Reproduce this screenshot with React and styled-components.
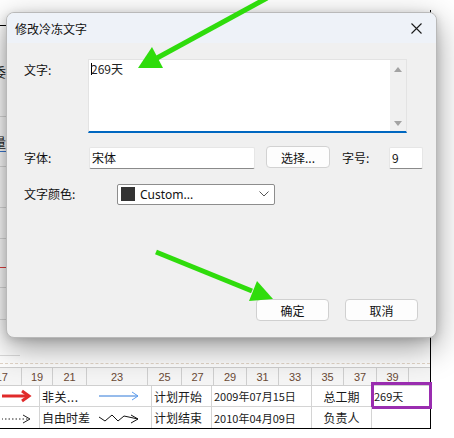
import React from "react";
import styled, { createGlobalStyle } from "styled-components";

const GlobalStyle = createGlobalStyle`
  html, body {
    margin: 0;
    padding: 0;
    background: #ffffff;
  }
  body {
    font-family: "Noto Sans CJK SC", "Noto Sans", sans-serif;
  }
`;

const CJK = `"Noto Sans CJK SC", "Noto Sans", sans-serif`;

const headerCols = [
  { w: 22, label: "17", first: true },
  { w: 31, label: "19" },
  { w: 34, label: "21" },
  { w: 61, label: "23" },
  { w: 34, label: "25" },
  { w: 32, label: "27" },
  { w: 33, label: "29" },
  { w: 32, label: "31" },
  { w: 33, label: "33" },
  { w: 32, label: "35" },
  { w: 33, label: "37" },
  { w: 32, label: "39" },
  { w: 21, label: "", last: true },
];

// rows of the sheet that sit behind the dialog, only their left edge shows
const railRows = [
  { h: 16, line: "#000", lineW: 6 },
  { h: 91, text: "委", line: "#dcdcdc" },
  { h: 50, text: "量", underline: true, line: "#dcdcdc" },
  { h: 41, line: "#dcdcdc" },
  { h: 31, line: "#dcdcdc" },
  { h: 29, line: "#e04040" },
  { h: 20, line: "#dcdcdc" },
  { h: 32, line: "#dcdcdc" },
  { h: 36, line: "#dcdcdc" },
];

const App = () => {
  return (
    <>
      <GlobalStyle />
      <Page>
        <Sheet>
          <SheetBody>
            <Rail>
              {railRows.map((r, i) => (
                <RailRow key={i} h={r.h} line={r.line} lineW={r.lineW}>
                  {r.text && <RailText underline={r.underline}>{r.text}</RailText>}
                </RailRow>
              ))}
            </Rail>
          </SheetBody>
          <DashRule />
          <HeaderRow>
            {headerCols.map((c, i) => (
              <HeadCell key={i} w={c.w} first={c.first} last={c.last}>
                {c.label}
              </HeadCell>
            ))}
          </HeaderRow>
          <BodyRow>
            <Cell w={40}>
              <svg width="38" height="20" viewBox="0 0 38 20">
                <line x1="-4" y1="10" x2="26" y2="10" stroke="#e02a2a" strokeWidth="3" />
                <polyline points="20,5 27,10 20,15" fill="none" stroke="#e02a2a" strokeWidth="3" />
              </svg>
            </Cell>
            <Cell w={112}>
              <CellText spaced>非关...</CellText>
              <LineArrow width="42" height="20" viewBox="0 0 42 20">
                <line x1="1" y1="10" x2="40" y2="10" stroke="#2f78d8" strokeWidth="1" />
                <polyline points="34,6 40,10 34,14" fill="none" stroke="#5a9cf0" strokeWidth="1" />
              </LineArrow>
            </Cell>
            <Cell w={60}>
              <CellText>计划开始</CellText>
            </Cell>
            <Cell w={100}>
              <DateText>2009年07月15日</DateText>
            </Cell>
            <Cell w={60} center>
              <CellText>总工期</CellText>
            </Cell>
            <Cell w={58} last highlight>
              <DateText>269天</DateText>
            </Cell>
          </BodyRow>
          <BodyRow lastRow>
            <Cell w={40}>
              <svg width="38" height="20" viewBox="0 0 38 20">
                <line x1="-4" y1="11" x2="27" y2="11" stroke="#222" strokeWidth="1" strokeDasharray="1.5 2" />
                <polyline points="21,7 28,11 21,15" fill="none" stroke="#222" strokeWidth="1" />
              </svg>
            </Cell>
            <Cell w={112}>
              <CellText>自由时差</CellText>
              <LineArrow width="42" height="20" viewBox="0 0 42 20">
                <polyline points="1,9 7,13 14,7 20,13 26,8 40,11" fill="none" stroke="#111" strokeWidth="1" />
                <polyline points="33,7 40,11 33,15" fill="none" stroke="#111" strokeWidth="1" />
              </LineArrow>
            </Cell>
            <Cell w={60}>
              <CellText>计划结束</CellText>
            </Cell>
            <Cell w={100}>
              <DateText>2010年04月09日</DateText>
            </Cell>
            <Cell w={60} center>
              <CellText>负责人</CellText>
            </Cell>
            <Cell w={58} last />
          </BodyRow>
        </Sheet>

        <Dialog>
          <TitleBar>
            <Title>修改冷冻文字</Title>
            <CloseButton>
              <svg width="11" height="11" viewBox="0 0 11 11">
                <path d="M0.5 0.5 L10.5 10.5 M10.5 0.5 L0.5 10.5" stroke="#1a1a1a" strokeWidth="1.1" />
              </svg>
            </CloseButton>
          </TitleBar>
          <Body>
            <TextRow>
              <Label w={64}>文字:</Label>
              <TextBox>
                <TextContent>
                  <Caret />
                  269天
                </TextContent>
                <ScrollBar>
                  <ScrollArrow />
                  <ScrollArrow down />
                </ScrollBar>
              </TextBox>
            </TextRow>
            <FieldRow>
              <Label w={65}>字体:</Label>
              <Input w={166}>宋体</Input>
              <SmallButton>选择...</SmallButton>
              <Label w={47}>字号:</Label>
              <Input w={34}>9</Input>
            </FieldRow>
            <FieldRow>
              <Label w={93}>文字颜色:</Label>
              <Combo>
                <Swatch />
                <ComboText>Custom...</ComboText>
                <svg width="10" height="6" viewBox="0 0 10 6">
                  <polyline points="0.5,0.5 5,5 9.5,0.5" fill="none" stroke="#555" strokeWidth="1" />
                </svg>
              </Combo>
            </FieldRow>
            <Spacer />
            <ButtonRow>
              <DialogButton>确定</DialogButton>
              <DialogButton>取消</DialogButton>
            </ButtonRow>
          </Body>
        </Dialog>

        <Arrows width="454" height="438" viewBox="0 0 454 438">
          <line x1="267" y1="-2" x2="157" y2="58" stroke="#2fdc0c" strokeWidth="5" />
          <polygon points="138,68 163,68 152,47" fill="#2fdc0c" />
          <line x1="156" y1="252" x2="252" y2="291" stroke="#2fdc0c" strokeWidth="5" />
          <polygon points="273,299 249,301 257,281" fill="#2fdc0c" />
        </Arrows>
      </Page>
    </>
  );
};

export default App;

const Page = styled.div`
  position: relative;
  width: 454px;
  height: 438px;
  overflow: hidden;
  background: #ffffff;
  padding-top: 10px;
  box-sizing: border-box;
`;

const Sheet = styled.div`
  width: 431px;
  height: 419px;
  box-sizing: border-box;
  border-right: 1px solid #000;
  border-bottom: 1px solid #000;
  display: flex;
  flex-direction: column;
`;

const SheetBody = styled.div`
  flex: 1;
  display: flex;
`;

const Rail = styled.div`
  width: 20px;
  display: flex;
  flex-direction: column;
`;

const RailRow = styled.div`
  height: ${(p) => p.h}px;
  position: relative;
  display: flex;
  align-items: center;
  &::after {
    content: "";
    position: absolute;
    left: 0;
    bottom: 0;
    width: ${(p) => p.lineW || 20}px;
    height: 1px;
    background: ${(p) => p.line};
  }
`;

const RailText = styled.span`
  margin-left: -7px;
  font-family: ${CJK};
  font-size: 13px;
  color: #222;
  border-bottom: ${(p) => (p.underline ? "1px solid #3a78d0" : "none")};
`;

const DashRule = styled.div`
  height: 4px;
  border-bottom: 1px dashed #e3d6c8;
  margin-bottom: 3px;
`;

const HeaderRow = styled.div`
  display: flex;
  height: 19px;
  box-sizing: border-box;
  border-top: 1px solid #cfcfcf;
  border-bottom: 1px solid #cfcfcf;
  background: #f5f5f5;
`;

const HeadCell = styled.div`
  width: ${(p) => p.w}px;
  flex: none;
  box-sizing: border-box;
  border-right: ${(p) => (p.last ? "none" : "1px solid #cfcfcf")};
  display: flex;
  align-items: center;
  justify-content: ${(p) => (p.first ? "flex-end" : "center")};
  padding-right: ${(p) => (p.first ? "13px" : "0")};
  font-family: "Liberation Sans", Arial, sans-serif;
  font-size: 11px;
  color: #6a4a36;
`;

const BodyRow = styled.div`
  display: flex;
  height: 21px;
  box-sizing: border-box;
  border-bottom: ${(p) => (p.lastRow ? "none" : "1px solid #d4d4d4")};
`;

const Cell = styled.div`
  position: relative;
  width: ${(p) => p.w}px;
  flex: none;
  box-sizing: border-box;
  border-right: ${(p) => (p.last ? "none" : "1px solid #d4d4d4")};
  display: flex;
  align-items: center;
  justify-content: ${(p) => (p.center ? "center" : "flex-start")};
  padding-left: ${(p) => (p.center ? "0" : "2px")};
  svg {
    flex: none;
  }
  ${(p) =>
    p.highlight &&
    `
    &::after {
      content: "";
      position: absolute;
      left: -1px;
      right: -2px;
      top: -4px;
      bottom: -3px;
      border: 3px solid #9a2db0;
    }
  `}
`;

const LineArrow = styled.svg`
  margin-left: auto;
  margin-right: 11px;
`;

const CellText = styled.span`
  font-family: ${CJK};
  font-size: 12px;
  color: #1a1a1a;
  white-space: nowrap;
  letter-spacing: ${(p) => (p.spaced ? "0.5px" : "0")};
`;

const DateText = styled.span`
  font-family: ${CJK};
  font-size: 11px;
  color: #1a1a1a;
  white-space: nowrap;
`;

const Dialog = styled.div`
  position: absolute;
  left: 6px;
  top: 12px;
  width: 431px;
  height: 326px;
  box-sizing: border-box;
  border: 1px solid #b9b9b9;
  border-radius: 8px;
  overflow: hidden;
  background: #f0f0f0;
  box-shadow: 0 10px 32px rgba(0, 0, 0, 0.4), 0 2px 8px rgba(0, 0, 0, 0.15);
  display: flex;
  flex-direction: column;
`;

const TitleBar = styled.div`
  height: 30px;
  flex: none;
  background: #eef2f8;
  display: flex;
  align-items: center;
  justify-content: space-between;
  padding: 0 8px;
`;

const Title = styled.span`
  font-family: ${CJK};
  font-size: 12px;
  color: #111;
`;

const CloseButton = styled.div`
  width: 24px;
  height: 24px;
  display: flex;
  align-items: center;
  justify-content: center;
`;

const Body = styled.div`
  flex: 1;
  display: flex;
  flex-direction: column;
  padding: 16px 17px;
`;

const TextRow = styled.div`
  display: flex;
  align-items: flex-start;
`;

const FieldRow = styled.div`
  display: flex;
  align-items: center;
  margin-top: 14px;
`;

const Label = styled.span`
  width: ${(p) => p.w}px;
  flex: none;
  font-family: ${CJK};
  font-size: 12px;
  color: #111;
  line-height: 22px;
`;

const TextBox = styled.div`
  width: 319px;
  height: 74px;
  box-sizing: border-box;
  background: #fff;
  border: 1px solid #e3e3e3;
  border-bottom: 2px solid #0067c0;
  display: flex;
`;

const TextContent = styled.div`
  flex: 1;
  display: flex;
  align-items: flex-start;
  padding: 1px 0 0 2px;
  font-family: ${CJK};
  font-size: 12px;
  color: #222;
  line-height: 15px;
`;

const Caret = styled.span`
  width: 1px;
  height: 12px;
  margin-top: 2px;
  margin-right: -1px;
  background: #000;
`;

const ScrollBar = styled.div`
  width: 16px;
  background: #f0f0f0;
  display: flex;
  flex-direction: column;
  justify-content: space-between;
  align-items: center;
  padding: 7px 0 5px;
`;

const ScrollArrow = styled.span`
  width: 0;
  height: 0;
  border-left: 4px solid transparent;
  border-right: 4px solid transparent;
  ${(p) =>
    p.down
      ? "border-top: 5px solid #a3a3a3;"
      : "border-bottom: 5px solid #a3a3a3;"}
`;

const Input = styled.div`
  width: ${(p) => p.w}px;
  height: 22px;
  flex: none;
  box-sizing: border-box;
  background: #fff;
  border: 1px solid #e6e6e6;
  border-bottom: 1px solid #8a8a8a;
  border-radius: 2px;
  padding-left: 2px;
  font-family: ${CJK};
  font-size: 12px;
  color: #111;
  line-height: 19px;
`;

const SmallButton = styled.div`
  width: 64px;
  height: 22px;
  flex: none;
  margin: -2px 12px 0 11px;
  box-sizing: border-box;
  border: 1px solid #d2d2d2;
  border-radius: 4px;
  background: #fdfdfd;
  display: flex;
  align-items: center;
  justify-content: center;
  font-family: ${CJK};
  font-size: 12px;
  color: #111;
`;

const Combo = styled.div`
  width: 158px;
  height: 21px;
  box-sizing: border-box;
  background: #fff;
  border: 1px solid #8d8d8d;
  border-radius: 2px;
  display: flex;
  align-items: center;
  padding: 0 5px 0 3px;
`;

const Swatch = styled.span`
  width: 14px;
  height: 14px;
  background: #333;
  flex: none;
`;

const ComboText = styled.span`
  flex: 1;
  margin-left: 5px;
  font-family: "Noto Sans", "Open Sans", sans-serif;
  font-size: 12px;
  color: #111;
`;

const Spacer = styled.div`
  flex: 1;
`;

const ButtonRow = styled.div`
  display: flex;
  justify-content: flex-end;
  gap: 16px;
  padding-right: 1px;
`;

const DialogButton = styled.div`
  width: 73px;
  height: 22px;
  box-sizing: border-box;
  border: 1px solid #d0d0d0;
  border-radius: 4px;
  background: #fdfdfd;
  display: flex;
  align-items: center;
  justify-content: center;
  font-family: ${CJK};
  font-size: 12px;
  color: #111;
`;

const Arrows = styled.svg`
  position: absolute;
  left: 0;
  top: 0;
  pointer-events: none;
`;
